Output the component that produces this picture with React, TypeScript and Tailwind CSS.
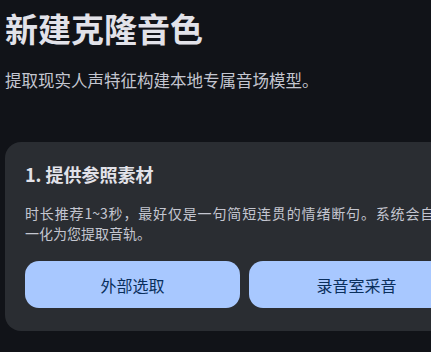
import React from 'react';

const font = { fontFamily: '"Noto Sans CJK SC", "Noto Sans", sans-serif' };

export default function App() {
  return (
    <div className="w-[431px] h-[352px] overflow-hidden bg-[#111318] px-[5px] pt-2" style={font}>
      <h1 className="text-[33px] leading-[40px] font-bold text-[#e2e2e9]">新建克隆音色</h1>
      <p className="mt-5 text-[16.5px] leading-6 text-[#c4c6d0]">提取现实人声特征构建本地专属音场模型。</p>

      <div className="mt-[50px] w-[479px] shrink-0 rounded-2xl bg-[#2a2d32] px-5 pt-5 pb-[23px]">
        <h2 className="text-[18px] leading-[25px] font-bold text-[#e2e2e9]">1. 提供参照素材</h2>
        <div className="mt-4 text-[14px] leading-5 text-[#c4c6d0]">
          <span className="block text-justify [text-align-last:justify]">
            时长推荐1~3秒，最好仅是一句简短连贯的情绪断句。系统会自动归
          </span>
          <span className="block">一化为您提取音轨。</span>
        </div>
        <div className="mt-[18px] grid grid-cols-2 gap-[9px]">
          <button className="h-[47px] rounded-[14px] bg-[#a8c8ff] text-[16px] text-[#0a2f5c]">外部选取</button>
          <button className="h-[47px] rounded-[14px] bg-[#a8c8ff] text-[16px] text-[#0a2f5c]">录音室采音</button>
        </div>
      </div>
    </div>
  );
}
